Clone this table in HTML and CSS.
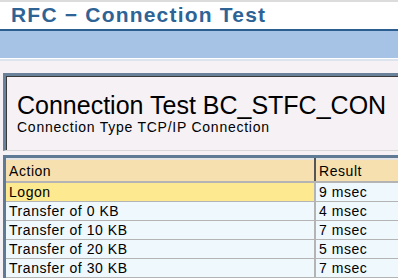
FILE: index.html
```html
<!DOCTYPE html>
<html lang="en">
<head>
  <meta charset="UTF-8" />
  <title>RFC - Connection Test</title>
  <link rel="stylesheet" href="styles.css">
</head>
<body>
  <div class="titlebar">
    <h1>RFC &minus; Connection Test</h1>
  </div>
  <div class="toolbar"></div>

  <!-- шапка с именем назначения -->
  <div class="panel">
    <div class="panel-inner">
      <div class="dest">Connection Test BC_STFC_CON</div>
      <div class="dest-type">Connection Type TCP/IP Connection</div>
    </div>
  </div>

  <div class="grid">
    <table>
      <tr class="head"><td class="c-action">Action</td><td>Result</td></tr>
      <tr class="sel"><td class="c-action">Logon</td><td>9 msec</td></tr>
      <tr><td class="c-action">Transfer of 0 KB</td><td>4 msec</td></tr>
      <tr><td class="c-action">Transfer of 10 KB</td><td>7 msec</td></tr>
      <tr><td class="c-action">Transfer of 20 KB</td><td>5 msec</td></tr>
      <tr><td class="c-action">Transfer of 30 KB</td><td>7 msec</td></tr>
    </table>
  </div>
</body>
</html>
```

FILE: styles.css
```css
body { margin: 0; background: #f5f1f5; font-family: "Liberation Sans", Arial, sans-serif; overflow: hidden; }
.titlebar { background: #fff; border-top: 2px solid #dcdcdc; height: 27px; }
h1 { margin: 0; padding-left: 11px; font-size: 21px; line-height: 26px; color: #2e6396; letter-spacing: 1.2px; }
.toolbar { height: 27px; background: #a6c3e5; border-top: 2px solid #2d5e90; border-bottom: 1px solid #fff; box-shadow: 0 2px 0 #dde4ee; }

.panel { margin: 14px 0 0 3px; border-top: 3px solid #6a8299; border-left: 3px solid #6a8299; border-bottom: 1px solid #d8d8d8; }
.panel-inner { height: 73px; border-top: 1px solid #3a3a3a; border-left: 1px solid #3a3a3a; padding-left: 10px; }
.dest { padding-top: 15px; font-size: 25px; line-height: 26px; color: #000; white-space: nowrap; }
.dest-type { margin-top: 1px; font-size: 14px; line-height: 16px; letter-spacing: 0.75px; white-space: nowrap; }

.grid { margin: 4px 0 0 3px; border-top: 3px solid #5f7a94; border-left: 3px solid #5f7a94; }
table { border-collapse: collapse; width: 420px; font-size: 14px; letter-spacing: 0.55px; }
td { height: 18px; padding: 0 0 0 3px; border-bottom: 1px solid #b4b4b4; background: #eff8fd; white-space: nowrap; line-height: 18px; }
.c-action { width: 305px; border-right: 2px solid #b4b4b4; }
.head td { height: 21px; background: #f7e0b0; border-top: 2px solid #e4e4e4; border-bottom: 2px solid #b4b4b4; }
.head .c-action { border-right-color: #555; }
.sel .c-action { background: #fde98f; }
```
